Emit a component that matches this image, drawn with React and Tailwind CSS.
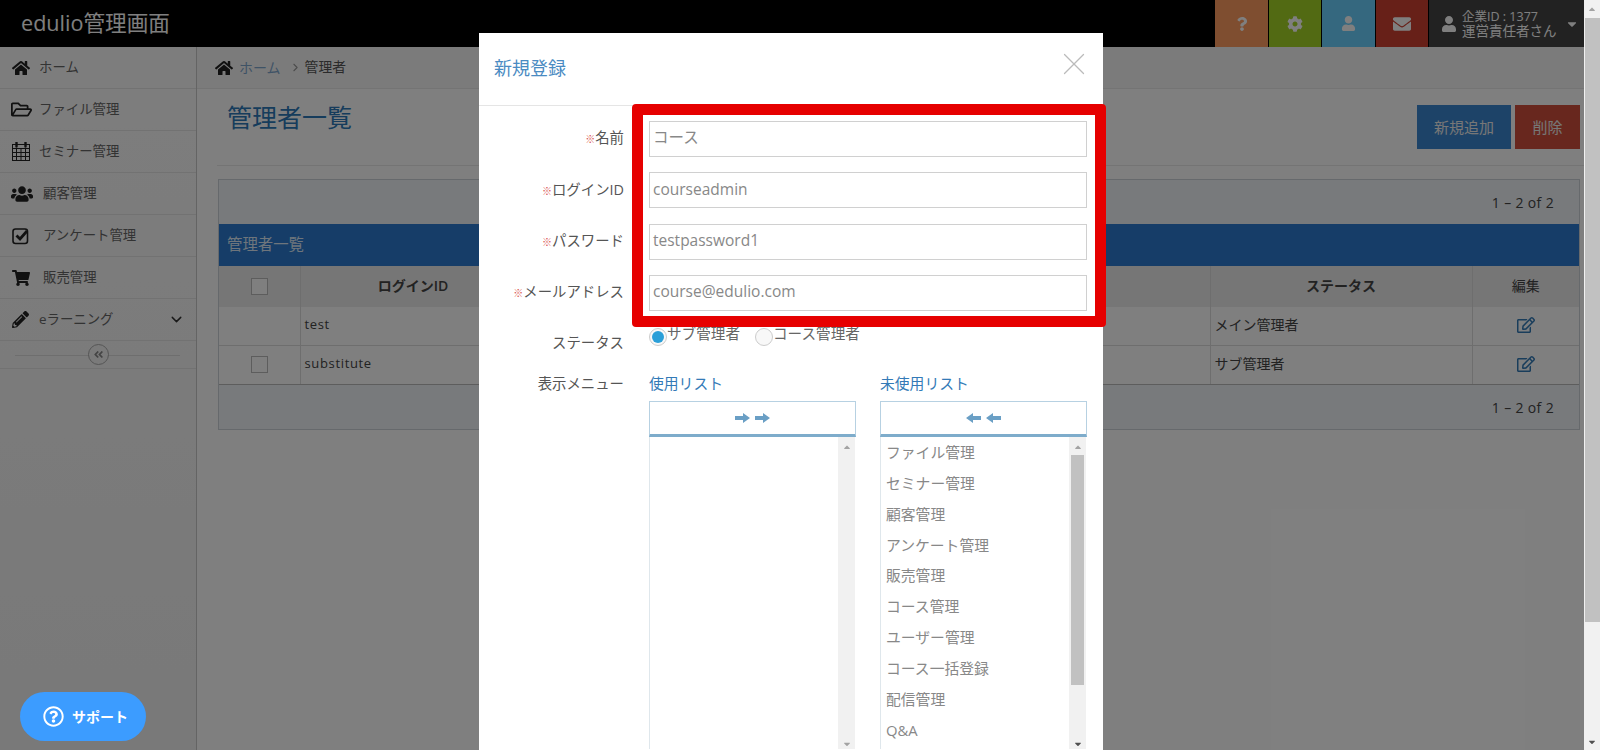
import React from "react";
import {
  FaHome, FaRegFolderOpen, FaUsers, FaShoppingCart, FaPencilAlt,
  FaQuestion, FaCog, FaUser, FaEnvelope, FaCaretDown, FaRegEdit,
  FaAngleDoubleLeft, FaRegQuestionCircle, FaCaretUp,
} from "react-icons/fa";
import { LuChevronDown, LuChevronRight, LuX } from "react-icons/lu";

const font = { fontFamily: '"Open Sans","Noto Sans CJK JP",sans-serif' };

function CalendarIcon() {
  return (
    <svg width="18" height="19" viewBox="0 0 18 19" fill="none" stroke="currentColor">
      <rect x="0.5" y="2.5" width="17" height="16" />
      <path d="M0.5 6.5h17M0.5 10.5h17M0.5 14.5h17M4.5 6.5v12M9 6.5v12M13.5 6.5v12" />
      <path d="M4.5 0.5v4M13.5 0.5v4" strokeWidth="2.4" strokeLinecap="round" />
    </svg>
  );
}

function CheckIcon() {
  return (
    <svg width="18" height="18" viewBox="0 0 18 18" fill="none" stroke="currentColor">
      <rect x="1" y="2" width="14.5" height="14.5" rx="2.5" strokeWidth="1.6" />
      <path d="M4.5 8.5l3.5 3.5 7-8" strokeWidth="2.8" />
    </svg>
  );
}

function ArrowIcon({ left }) {
  return (
    <svg width="15" height="10" viewBox="0 0 15 10" fill="currentColor" className={left ? "-scale-x-100" : ""}>
      <path d="M0 3h8V0l7 5-7 5V7H0z" />
    </svg>
  );
}

const navItems = [
  { icon: <FaHome size={18} />, text: "ホーム" },
  { icon: <FaRegFolderOpen size={21} className="-ml-[1px]" />, text: "ファイル管理" },
  { icon: <CalendarIcon />, text: "セミナー管理" },
  { icon: <FaUsers size={22} className="-ml-[1px]" />, text: "顧客管理" },
  { icon: <CheckIcon />, text: "アンケート管理" },
  { icon: <FaShoppingCart size={18} />, text: "販売管理" },
  { icon: <FaPencilAlt size={17} />, text: "eラーニング" },
];

const menuList = ["ファイル管理", "セミナー管理", "顧客管理", "アンケート管理", "販売管理", "コース管理", "ユーザー管理", "コース一括登録", "配信管理", "Q&A"];

const fields = [
  { label: "名前", value: "コース" },
  { label: "ログインID", value: "courseadmin" },
  { label: "パスワード", value: "testpassword1" },
  { label: "メールアドレス", value: "course@edulio.com" },
];

function Sidebar() {
  return (
    <aside className="w-[197px] shrink-0 border-r border-[#c8c8c8] bg-gradient-to-b from-[#fbfbfb] to-[#f2f2f2]">
      {navItems.map((item, i) => (
        <div key={i} className="h-[42px] flex items-center border-b border-[#e4e4e4] text-[#666] text-[13.4px] pl-[12px] pr-[11px]">
          <span className="w-[27px] text-[#222] flex justify-start shrink-0">{item.icon}</span>
          <span className={i > 2 && i < 6 ? "ml-[4px]" : ""}>{item.text}</span>
          {i === 6 && <LuChevronDown size={17} className="ml-auto text-[#333]" />}
        </div>
      ))}
      <div className="h-[28px] flex items-center justify-center relative border-b border-[#e4e4e4]">
        <div className="absolute left-[15px] right-[16px] top-[14px] h-px bg-[#ddd]" />
        <div className="relative w-[21px] h-[21px] rounded-full border border-[#aaa] bg-[#f4f4f4] flex items-center justify-center text-[#888]">
          <FaAngleDoubleLeft size={11} />
        </div>
      </div>
    </aside>
  );
}

function Pager() {
  return (
    <div className="h-[44px] bg-[#f1f4f9] flex items-center justify-end pr-[25px] text-[14px] tracking-wide text-[#444]">1 – 2 of 2</div>
  );
}

function Checkbox() {
  return <span className="block w-[17px] h-[17px] bg-white border border-[#bbb]" />;
}

function AdminTable() {
  return (
    <div className="mt-[13px] ml-[21px] mr-[4px] border border-[#cdd2d8] text-[14px]">
      <Pager />
      <div className="h-[42px] bg-[#2c7ad0] text-[#ddebf8] text-[15.4px] flex items-center pl-[8px]">管理者一覧</div>
      <table className="w-full border-collapse table-fixed">
        <thead>
          <tr className="h-[41px] bg-[#ececec] text-[#444] font-semibold">
            <th className="w-[81px] border-r border-[#ddd] align-middle"><div className="flex justify-center"><Checkbox /></div></th>
            <th className="w-[226px] border-r border-[#ddd] font-semibold pb-[3px]">ログインID</th>
            <th className="border-r border-[#ddd]" />
            <th className="w-[262px] border-r border-[#ddd] font-semibold pb-[3px]">ステータス</th>
            <th className="w-[107px] font-normal pb-[3px]">編集</th>
          </tr>
        </thead>
        <tbody className="text-[#444]">
          <tr className="h-[38px] bg-white border-b border-[#ddd]">
            <td className="border-r border-[#ddd]" />
            <td className="border-r border-[#ddd] pl-[4px] pb-[2px] text-[13px] tracking-wider">test</td>
            <td className="border-r border-[#ddd]" />
            <td className="border-r border-[#ddd] pl-[4px] pb-[2px]">メイン管理者</td>
            <td className="pb-[2px]"><div className="flex justify-center text-[#337ab7]"><FaRegEdit size={18} /></div></td>
          </tr>
          <tr className="h-[39px] bg-white">
            <td className="border-r border-[#ddd]"><div className="flex justify-center"><Checkbox /></div></td>
            <td className="border-r border-[#ddd] pl-[4px] pb-[2px] text-[13px] tracking-wider">substitute</td>
            <td className="border-r border-[#ddd]" />
            <td className="border-r border-[#ddd] pl-[4px] pb-[2px]">サブ管理者</td>
            <td className="pb-[2px]"><div className="flex justify-center text-[#337ab7]"><FaRegEdit size={18} /></div></td>
          </tr>
        </tbody>
      </table>
      <div className="border-t border-[#bbb]"><Pager /></div>
    </div>
  );
}

function ListBox({ title, left, items, thumb }) {
  return (
    <div className="w-[207px]">
      <div className="h-[18px] flex items-center text-[#337ab7] text-[14.8px]">{title}</div>
      <div className="mt-[9px] h-[36px] border border-[#b7d1e2] border-b-[3px] border-b-[#7eaccb] flex items-center justify-center gap-[5px] text-[#6a9fc5]">
        <ArrowIcon left={left} />
        <ArrowIcon left={left} />
      </div>
      <div className="h-[312px] border-l border-[#dfe7ec] flex overflow-hidden">
        <div className="flex-1 pl-[5px] text-[14.8px] text-[#888] overflow-hidden">
          <div className="-mt-[1px]">
            {items.map((t) => (
              <div key={t} className="h-[30.95px] flex items-center">{t}</div>
            ))}
          </div>
        </div>
        <div className="w-[17px] mr-[1px] bg-[#f1f1f1] flex flex-col items-center relative">
          <FaCaretUp size={10} className="text-[#a3a3a3] mt-[5px]" />
          {thumb && <div className="absolute left-[2px] top-[18px] w-[13px] h-[230px] bg-[#c1c1c1]" />}
          <FaCaretDown size={10} className={`mt-auto ${thumb ? "text-[#505050]" : "text-[#a3a3a3]"}`} />
        </div>
      </div>
    </div>
  );
}

function Radio({ checked, label }) {
  return (
    <label className="flex items-center">
      <span className="w-[18px] h-[18px] rounded-full border border-[#ccc] bg-[#f8f8f8] flex items-center justify-center mt-[4px]">
        {checked && <span className="w-[12px] h-[12px] rounded-full bg-[#2b9fd8]" />}
      </span>
      <span className="text-[14.6px] text-[#666] -mt-[2px]">{label}</span>
    </label>
  );
}

function RegisterModal() {
  return (
    <div className="absolute left-[479px] top-[33px] w-[624px] h-[717px] bg-white overflow-hidden">
      <div className="h-[73px] border-b border-[#e5e5e5] flex items-center pl-[15px] pr-[10px] justify-between relative">
        <h3 className="text-[18px] text-[#4a8bc2] font-normal pb-[2px]">新規登録</h3>
        <LuX size={38} strokeWidth={0.8} className="text-[#bbb] -mt-[11px]" />
      </div>
      <div className="pt-[15px]">
        {fields.map((f) => (
          <div key={f.label} className="h-[36px] mb-[15.33px] flex items-center">
            <label className="w-[145px] text-right text-[14.4px] text-[#555] pb-[2px]"><span className="text-[#d9534f] text-[10px]">※</span>{f.label}</label>
            <div className="ml-[25px] w-[438px] h-[36px] border border-[#d0d0d0] flex items-center pl-[3px] pb-[2px] text-[15.5px] text-[#888]">{f.value}</div>
          </div>
        ))}
        <div className="flex -mt-[2px] h-[50px]">
          <div className="w-[145px] text-right text-[14.4px] text-[#555] pt-[8px]">ステータス</div>
          <div className="ml-[25px] flex gap-[15px] items-start">
            <Radio checked label="サブ管理者" />
            <Radio label="コース管理者" />
          </div>
        </div>
        <div className="flex">
          <div className="w-[145px] text-right text-[14.4px] text-[#555] h-[18px] flex items-center justify-end">表示メニュー</div>
          <div className="ml-[25px] flex gap-[24px]">
            <ListBox title="使用リスト" items={[]} />
            <ListBox title="未使用リスト" left items={menuList} thumb />
          </div>
        </div>
      </div>
    </div>
  );
}

export default function App() {
  return (
    <div className="relative w-[1600px] h-[750px] overflow-hidden flex bg-white" style={font}>
      <div className="w-[1584px] flex flex-col">
        <header className="h-[47px] bg-black flex items-stretch text-white shrink-0">
          <div className="pl-[21px] text-[21.6px] text-white flex items-center">edulio管理画面</div>
          <div className="ml-auto flex gap-px">
            <div className="w-[53px] bg-[#ff9c60] flex items-center justify-center"><FaQuestion size={14} /></div>
            <div className="w-[52px] bg-[#a4d426] flex items-center justify-center"><FaCog size={16} /></div>
            <div className="w-[53px] bg-[#6ad0ff] flex items-center justify-center"><FaUser size={15} /></div>
            <div className="w-[52px] bg-[#ce4030] flex items-center justify-center"><FaEnvelope size={18} /></div>
            <div className="w-[155px] bg-[#444] flex items-center pl-[12px]">
              <FaUser size={16} />
              <div className="ml-[5px] leading-[15px] whitespace-nowrap">
                <div className="text-[12.5px]">企業ID : 1377</div>
                <div className="text-[13.5px]">運営責任者さん</div>
              </div>
              <FaCaretDown size={14} className="ml-[8px]" />
            </div>
          </div>
        </header>
        <div className="flex flex-1 min-h-0">
          <Sidebar />
          <main className="flex-1 min-w-0">
            <div className="h-[42px] border-b border-[#e8e8e8] bg-[#f7f7f7] flex items-center pl-[18px] text-[14px]">
              <FaHome size={18} className="text-[#222]" />
              <span className="ml-[6px] text-[#7fa6cc]">ホーム</span>
              <LuChevronRight size={13} className="ml-[8px] mr-[3px] text-[#999]" />
              <span className="text-[#555] text-[13.8px]">管理者</span>
            </div>
            <div className="h-[77px] ml-[20px] border-b border-[#e8e8e8] flex justify-between items-start">
              <h1 className="ml-[10px] mt-[12px] text-[25px] text-[#2c79b8] font-normal leading-[32px]">管理者一覧</h1>
              <div className="flex gap-[4px] mt-[16px] mr-[4px] text-[15px] text-[#eee]">
                <div className="w-[94px] h-[44px] bg-[#3a86d0] flex items-center justify-center">新規追加</div>
                <div className="w-[65px] h-[44px] bg-[#d04e3c] flex items-center justify-center">削除</div>
              </div>
            </div>
            <AdminTable />
          </main>
        </div>
      </div>
      <div className="w-[16px] bg-[#f1f1f1] flex flex-col items-center">
        <FaCaretUp size={10} className="text-[#a3a3a3] mt-[4px]" />
        <FaCaretDown size={10} className="text-[#505050] mt-auto mb-[3px]" />
      </div>
      {/* modal backdrop */}
      <div className="absolute inset-0 right-[16px] bg-black/50" />
      <div className="absolute left-[1585px] top-[18px] w-[15px] h-[604px] bg-[#c1c1c1]" />
      <RegisterModal />
      <div className="absolute left-[632px] top-[104px] w-[474px] h-[223px] border-[11px] border-[#e60000] rounded-[4px]" />
      <div className="absolute left-[20px] top-[692px] w-[126px] h-[49px] rounded-full bg-[#3c9cff] text-white flex items-center pl-[23px] gap-[8px]">
        <FaRegQuestionCircle size={21} />
        <span className="font-bold text-[14px]">サポート</span>
      </div>
    </div>
  );
}
